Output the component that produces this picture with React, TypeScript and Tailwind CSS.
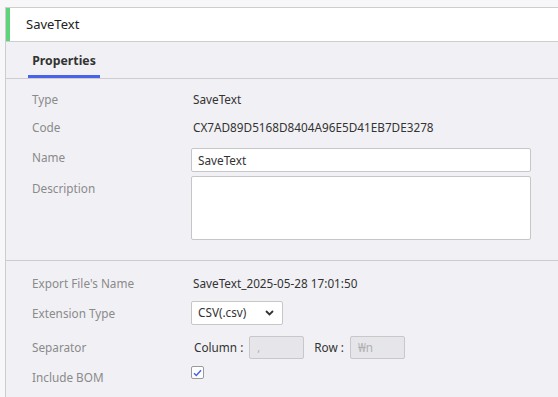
export default function App() {
  const font = { fontFamily: '"Noto Sans", "Noto Sans CJK KR", sans-serif' };
  return (
    <div className="w-[558px] h-[397px] overflow-hidden bg-[#f7f7f9] pt-[7px] pl-[5px]" style={font}>
      <div className="border-l border-t border-[#cdcdcd] bg-[#f1f1f5] h-[400px]">
        {/* header */}
        <div className="flex h-[34px] bg-white border-b border-[#cdcdcd]">
          <div className="w-[4px] bg-[#5dd37a]" />
          <div className="pl-[16px] flex items-center text-[13px] text-[#222]">SaveText</div>
        </div>

        {/* tabs */}
        <div className="flex h-[37px] border-b border-[#cdcdcd] pl-[22px]">
          <div className="flex flex-col justify-end w-[72px]">
            <div className="flex-1 flex items-center justify-center pt-[5px] text-[12.3px] font-bold text-[#333]">
              Properties
            </div>
            <div className="h-[3px] bg-[#4862e8]" />
          </div>
        </div>

        {/* general */}
        <div className="pt-[7px] pb-[20px] pl-[26px] border-b border-[#cdcdcd] text-[11.75px]">
          <div className="flex h-[28px] items-center">
            <div className="w-[161px] text-[#8a8a8a]">Type</div>
            <div className="text-[#333]">SaveText</div>
          </div>
          <div className="flex h-[28px] items-center">
            <div className="w-[161px] text-[#8a8a8a]">Code</div>
            <div className="text-[#333]">CX7AD89D5168D8404A96E5D41EB7DE3278</div>
          </div>
          <div className="flex mt-[6px]">
            <div className="w-[159px] leading-[18px] text-[#8a8a8a]">Name</div>
            <input
              readOnly
              value="SaveText"
              className="w-[340px] h-[24px] bg-white border border-[#c6c6c6] rounded-[2px] px-[6px] text-[11.75px] text-[#333] outline-none"
            />
          </div>
          <div className="flex mt-[4px]">
            <div className="w-[159px] pt-[3px] leading-[18px] text-[#8a8a8a]">Description</div>
            <textarea
              readOnly
              className="w-[340px] h-[64px] bg-white border border-[#c6c6c6] rounded-[2px] resize-none outline-none"
            />
          </div>
        </div>

        {/* export */}
        <div className="pt-[9px] pl-[26px] text-[11.75px]">
          <div className="flex h-[28px] items-center">
            <div className="w-[161px] text-[#8a8a8a]">Export File's Name</div>
            <div className="text-[#333]">SaveText_2025-05-28 17:01:50</div>
          </div>
          <div className="flex mt-[3px] items-center">
            <div className="w-[159px] pt-[2px] text-[#8a8a8a]">Extension Type</div>
            <div className="w-[92px] h-[24px] bg-white border border-[#c6c6c6] rounded-[2px] flex items-center justify-between pl-[6px] pr-[8px] text-[#333]">
              <span>CSV(.csv)</span>
              <svg width="9" height="6" viewBox="0 0 9 6">
                <path d="M1 1l3.5 3.5L8 1" fill="none" stroke="#333" strokeWidth="1.8" />
              </svg>
            </div>
          </div>
          <div className="flex mt-[11px] items-center">
            <div className="w-[162px] text-[#8a8a8a]">Separator</div>
            <span className="text-[#333]">Column :</span>
            <div className="ml-[6px] w-[55px] h-[23px] bg-[#e6e6ea] border border-[#c8c8c8] rounded-[2px] pl-[7px] text-[#b0b0b0] leading-[21px] text-[11px]">,</div>
            <span className="ml-[10px] text-[#333]">Row :</span>
            <div className="ml-[6px] w-[55px] h-[23px] bg-[#e6e6ea] border border-[#c8c8c8] rounded-[2px] pl-[7px] text-[#b0b0b0] leading-[21px]">₩n</div>
          </div>
          <div className="flex mt-[7px]">
            <div className="w-[159px] pt-[2px] leading-[18px] text-[#8a8a8a]">Include BOM</div>
            <div className="w-[13px] h-[13px] bg-white border border-[#9a9a9a] rounded-[2px] flex items-center justify-center">
              <svg width="9" height="8" viewBox="0 0 9 8">
                <path d="M1 4.2l2.3 2.3L8 1.2" fill="none" stroke="#4862e8" strokeWidth="1.5" />
              </svg>
            </div>
          </div>
        </div>
      </div>
    </div>
  );
}
